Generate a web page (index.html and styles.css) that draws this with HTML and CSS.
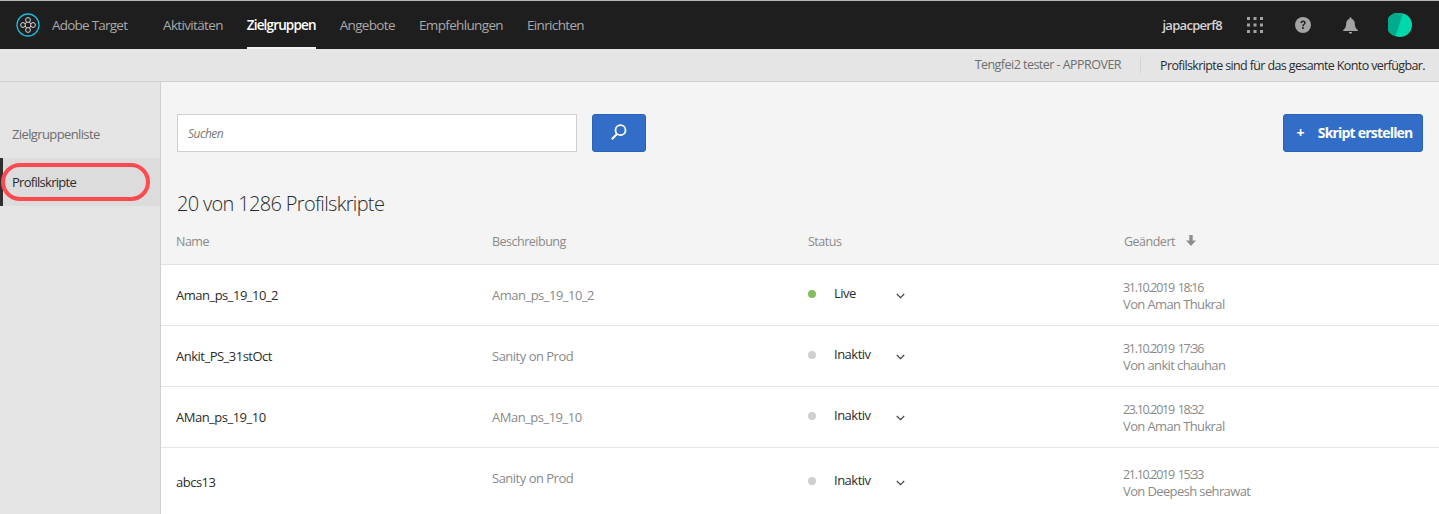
FILE: index.html
```html
<!DOCTYPE html>
<html lang="de">
<head>
  <meta charset="UTF-8">
  <title>Adobe Target - Profilskripte</title>
  <link rel="stylesheet" href="styles.css">
</head>
<body>
  <header class="topbar">
    <div class="brand">
      <svg class="brand-logo" width="24" height="24" viewBox="0 0 24 24" fill="none">
        <circle cx="12" cy="12" r="11" stroke="#1fb8dc" stroke-width="1.3"/>
        <g stroke="#d8d8d8" stroke-width="1" fill="none">
          <circle cx="12" cy="7" r="2.4"/>
          <circle cx="12" cy="17" r="2.4"/>
          <circle cx="7" cy="12" r="2.4"/>
          <circle cx="17" cy="12" r="2.4"/>
          <path d="M9.3 11 10.6 9M13.4 9l1.4 2M9.2 13l1.4 2M14.8 13l-1.4 2"/>
        </g>
      </svg>
      <span>Adobe Target</span>
    </div>
    <nav class="nav">
      <a href="#">Aktivitäten</a>
      <a href="#" class="active">Zielgruppen</a>
      <a href="#">Angebote</a>
      <a href="#">Empfehlungen</a>
      <a href="#">Einrichten</a>
    </nav>
    <div class="topbar-right">
      <span class="account">japacperf8</span>
      <svg width="16" height="16" viewBox="0 0 16 16" fill="#a3a3a3">
        <rect x="0" y="0" width="3" height="3"/><rect x="6.500" y="0" width="3" height="3"/><rect x="13" y="0" width="3" height="3"/>
        <rect x="0" y="6.500" width="3" height="3"/><rect x="6.500" y="6.500" width="3" height="3"/><rect x="13" y="6.500" width="3" height="3"/>
        <rect x="0" y="13" width="3" height="3"/><rect x="6.500" y="13" width="3" height="3"/><rect x="13" y="13" width="3" height="3"/>
      </svg>
      <svg width="16" height="16" viewBox="0 0 16 16">
        <circle cx="8" cy="8" r="8" fill="#a3a3a3"/>
        <path d="M5.400 6.100C5.500 4.500 6.600 3.600 8.100 3.600c1.500 0 2.600.9 2.600 2.200 0 1.900-2 1.800-2 3.500H7.200c0-2.300 1.900-2.300 1.900-3.400 0-.5-.4-.9-1-.9-.7 0-1.100.4-1.200 1.100z" fill="#1e1e1e"/>
        <rect x="7.100" y="10.200" width="1.700" height="1.800" fill="#1e1e1e"/>
      </svg>
      <svg class="bell" width="15" height="17" viewBox="0 0 15 17" fill="#a3a3a3">
        <path d="M6.500 1.200a1 1 0 0 1 2 0v.7c2.300.5 3.300 2.300 3.300 4.600 0 3 .8 4.700 3 6.500v.9H.2V13c2.200-1.800 3-3.500 3-6.500 0-2.300 1-4.100 3.300-4.600z"/>
        <path d="M5.800 15h3.400a1.700 1.700 0 0 1-3.400 0z"/>
      </svg>
      <svg class="avatar" width="24" height="24" viewBox="0 0 24 24">
        <circle cx="12" cy="12" r="12" fill="#00d8ab"/>
        <path d="M15 .4A12 12 0 1 0 7.500 23.100z" fill="#00ac8c"/>
      </svg>
    </div>
  </header>

  <div class="subbar">
    <span class="role">Tengfei2 tester - APPROVER</span>
    <span class="notice">Profilskripte sind für das gesamte Konto verfügbar.</span>
  </div>

  <div class="layout">
    <aside class="sidebar">
      <a href="#" class="side-link">Zielgruppenliste</a>
      <a href="#" class="side-link current">Profilskripte</a>
      <div class="marker"></div>
    </aside>

    <main class="content">
      <div class="toolbar">
        <div class="search">Suchen</div>
        <button class="btn btn-search" type="button">
          <svg width="18" height="18" viewBox="0 0 18 18" fill="none" stroke="#fff">
            <circle cx="10.500" cy="7.200" r="5" stroke-width="1.800"/>
            <path d="M7 11 1.800 16.200" stroke-width="2"/>
          </svg>
        </button>
        <button class="btn btn-create" type="button"><span class="plus">+</span>Skript erstellen</button>
      </div>

      <h1>20 von 1286 Profilskripte</h1>

      <div class="table-head">
        <div>Name</div>
        <div>Beschreibung</div>
        <div>Status</div>
        <div class="sorted">Geändert
          <svg width="10" height="11" viewBox="0 0 10 11" fill="#8e8e8e"><path d="M3.300 0h3.400v5.500H10L5 11 0 5.500h3.300z"/></svg>
        </div>
      </div>

      <div class="table-wrap">
        <div class="rows">
          <div class="row">
            <div class="name">Aman_ps_19_10_2</div>
            <div class="desc">Aman_ps_19_10_2</div>
            <div class="status"><i class="dot live"></i><span class="status-label">Live</span><svg class="chev" width="9" height="6" viewBox="0 0 9 6" fill="none" stroke="#444" stroke-width="1.200"><path d="M.8 1 4.500 4.600 8.200 1"/></svg></div>
            <div class="changed"><span class="date">31.10.2019 18:16</span><br>Von Aman Thukral</div>
          </div>
          <div class="row">
            <div class="name">Ankit_PS_31stOct</div>
            <div class="desc">Sanity on Prod</div>
            <div class="status"><i class="dot"></i><span class="status-label">Inaktiv</span><svg class="chev" width="9" height="6" viewBox="0 0 9 6" fill="none" stroke="#444" stroke-width="1.200"><path d="M.8 1 4.500 4.600 8.200 1"/></svg></div>
            <div class="changed"><span class="date">31.10.2019 17:36</span><br>Von ankit chauhan</div>
          </div>
          <div class="row">
            <div class="name">AMan_ps_19_10</div>
            <div class="desc">AMan_ps_19_10</div>
            <div class="status"><i class="dot"></i><span class="status-label">Inaktiv</span><svg class="chev" width="9" height="6" viewBox="0 0 9 6" fill="none" stroke="#444" stroke-width="1.200"><path d="M.8 1 4.500 4.600 8.200 1"/></svg></div>
            <div class="changed"><span class="date">23.10.2019 18:32</span><br>Von Aman Thukral</div>
          </div>
          <div class="row row-tall">
            <div class="name">abcs13</div>
            <div class="desc">Sanity on Prod</div>
            <div class="status"><i class="dot"></i><span class="status-label">Inaktiv</span><svg class="chev" width="9" height="6" viewBox="0 0 9 6" fill="none" stroke="#444" stroke-width="1.200"><path d="M.8 1 4.500 4.600 8.200 1"/></svg></div>
            <div class="changed"><span class="date">21.10.2019 15:33</span><br>Von Deepesh sehrawat</div>
          </div>
        </div>
        <div class="scrollbar">
          <div class="scroll-arrow"></div>
          <div class="scroll-thumb"></div>
        </div>
      </div>
    </main>
  </div>
</body>
</html>
```

FILE: styles.css
```css
html, body {
  margin: 0;
  height: 514px;
  overflow: hidden;
}

body {
  font-family: "Open Sans", "Noto Sans", sans-serif;
  font-size: 13px;
  letter-spacing: -0.5px;
  background-color: #f4f4f4;
  color: #2c2c2c;
}

a {
  text-decoration: none;
  color: inherit;
}

.topbar {
  display: flex;
  align-items: center;
  height: 48px;
  border-top: 1px solid #b5b5b5;
  background-color: #1e1e1e;
  color: #a9a9a9;
}

.brand {
  display: flex;
  align-items: center;
  width: 163px;
  padding-left: 16px;
  box-sizing: border-box;
  font-size: 13.500px;
  letter-spacing: -0.77px;
}

.brand-logo {
  margin-right: 12px;
}

.nav {
  display: flex;
  gap: 24px;
  height: 100%;
  font-size: 13.500px;
  letter-spacing: -0.65px;
}

.nav a {
  display: flex;
  align-items: center;
  box-sizing: border-box;
  border-bottom: 2px solid transparent;
  padding-top: 2px;
}

.nav a.active {
  color: #fff;
  font-weight: 600;
  letter-spacing: -0.85px;
  border-bottom-color: #f0f0f0;
}

.topbar-right {
  display: flex;
  align-items: center;
  margin-left: auto;
  padding-right: 27px;
}

.account {
  color: #d4d4d4;
  font-weight: 600;
  letter-spacing: -0.7px;
  margin-right: 25px;
}

.topbar-right svg {
  margin-right: 32px;
}

.topbar-right .bell {
  margin-right: 30px;
}

.topbar-right .avatar {
  margin-right: 0;
}

.subbar {
  display: flex;
  justify-content: flex-end;
  align-items: center;
  height: 32px;
  padding-right: 14px;
  background-color: #e5e5e5;
  border-bottom: 1px solid #d0d0d0;
  font-size: 12.500px;
}

.role {
  color: #6e6e6e;
  letter-spacing: -0.53px;
  padding-right: 19px;
  border-right: 1px solid #d3d3d3;
  margin-right: 19px;
  line-height: 16px;
}

.notice {
  color: #2c2c2c;
  letter-spacing: -0.62px;
}

.layout {
  display: flex;
  height: 432px;
}

.sidebar {
  position: relative;
  flex: 0 0 160px;
  padding-top: 28px;
  background-color: #e5e5e5;
  border-right: 1px solid #d0d0d0;
}

.side-link {
  display: flex;
  align-items: center;
  height: 48px;
  padding-left: 12px;
  color: #6e6e6e;
  letter-spacing: -0.62px;
}

.side-link.current {
  height: 48px;
  padding-left: 9px;
  border-left: 3px solid #2f2f2f;
  background-color: #dcdcdc;
  color: #2c2c2c;
  letter-spacing: -0.72px;
}

.marker {
  position: absolute;
  left: 1px;
  top: 81px;
  width: 141px;
  height: 30px;
  border: 4px solid #ff4a50;
  border-radius: 20px;
}

.content {
  flex: 1;
  min-width: 0;
}

.toolbar {
  display: flex;
  align-items: center;
  padding: 32px 16px 0 16px;
}

.search {
  width: 400px;
  height: 38px;
  box-sizing: border-box;
  padding: 0 10px;
  line-height: 38px;
  background-color: #fff;
  border: 1px solid #cfcfcf;
  color: #777;
  font-size: 12px;
  font-style: italic;
}

.btn {
  height: 38px;
  padding: 0 0 2px;
  border: 1px solid #2a62b8;
  border-radius: 3px;
  background-color: #326ec8;
  color: #fff;
  font-family: inherit;
  font-size: 14px;
  font-weight: 700;
  letter-spacing: -0.8px;
}

.btn-search {
  display: flex;
  align-items: center;
  justify-content: center;
  width: 54px;
  margin-left: 15px;
}

.btn-create {
  width: 140px;
  margin-left: auto;
  padding-left: 3px;
}

.plus {
  margin-right: 14px;
}

h1 {
  margin: 38px 0 0 16px;
  font-size: 20px;
  line-height: 28px;
  font-weight: 300;
  letter-spacing: -0.67px;
  color: #2c2c2c;
}

.table-head {
  display: grid;
  grid-template-columns: repeat(4, 316px);
  height: 46px;
  padding-left: 15px;
  align-items: center;
  border-bottom: 1px solid #e1e1e1;
  color: #8a8a8a;
  font-size: 12.500px;
}

.sorted svg {
  margin-left: 8px;
}

.table-wrap {
  display: flex;
  background-color: #fff;
  height: 253px;
  overflow: hidden;
}

.rows {
  flex: 1;
}

.row {
  display: grid;
  grid-template-columns: repeat(4, 316px);
  align-items: center;
  height: 60px;
  padding-left: 15px;
  border-bottom: 1px solid #e6e6e6;
}

.row-tall {
  height: 69px;
  border-bottom: none;
}

.row-tall .name {
  padding-bottom: 2px;
}

.row-tall .desc {
  padding-bottom: 10px;
}

.row-tall .changed {
  padding-top: 0;
}

.name {
  color: #2c2c2c;
}

.desc {
  color: #8a8a8a;
}

.status {
  display: flex;
  align-items: center;
  padding-bottom: 5px;
}

.dot {
  position: relative;
  top: 1px;
  width: 8px;
  height: 8px;
  border-radius: 50%;
  background-color: #cfcfcf;
  margin-right: 19px;
}

.dot.live {
  background-color: #84bd5b;
}

.status-label {
  width: 62px;
  margin-left: -1px;
  color: #2c2c2c;
}

.chev {
  position: relative;
  top: 3px;
}

.changed {
  margin-left: -1px;
  padding-top: 2px;
  color: #8a8a8a;
  line-height: 17px;
  letter-spacing: -0.62px;
}

.date {
  font-size: 12.500px;
  letter-spacing: -1.3px;
  word-spacing: 2px;
}

.scrollbar {
  flex: 0 0 15px;
  border-left: 1px solid #e6e6e6;
  background-color: #f1f1f1;
}

.scroll-arrow {
  width: 0;
  margin: 7px auto 0;
  border: 4px solid transparent;
  border-top: none;
  border-bottom: 5px solid #a3a3a3;
}

.scroll-thumb {
  height: 178px;
  margin: 5px 1px 0;
  background-color: #bdbdbd;
}
```
